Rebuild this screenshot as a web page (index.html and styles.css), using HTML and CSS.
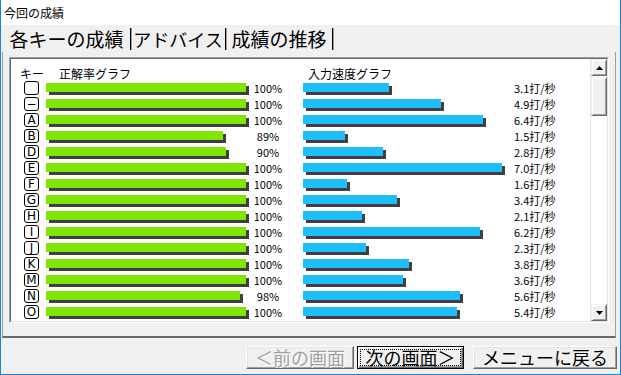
FILE: index.html
```html
<!DOCTYPE html>
<html lang="ja">

<head>
	<meta charset="UTF-8">
	<title>今回の成績</title>
	<link rel="stylesheet" href="styles.css">
</head>

<body>
	<div class="window">
		<div class="titlebar">今回の成績</div>

		<div class="tabs">
			<span class="tab tab-keys">各キーの成績</span>
			<span class="tab tab-advice">アドバイス</span>
			<span class="tab tab-history">成績の推移</span>
		</div>

		<div class="page">
			<div class="listbox">
				<div class="listbox-inner">
					<div class="list">
						<div class="list-head">
							<span class="head-key">キー</span>
							<span class="head-rate">正解率グラフ</span>
							<span class="head-speed">入力速度グラフ</span>
						</div>

						<div class="row"><span class="key"></span><span class="rate-cell"><span class="bar rate" style="width:200px"></span></span><span class="pct">100%</span><span class="speed-cell"><span class="bar speed" style="width:86px"></span></span><span class="spd">3.1打/秒</span></div>
						<div class="row"><span class="key">−</span><span class="rate-cell"><span class="bar rate" style="width:200px"></span></span><span class="pct">100%</span><span class="speed-cell"><span class="bar speed" style="width:138px"></span></span><span class="spd">4.9打/秒</span></div>
						<div class="row"><span class="key">A</span><span class="rate-cell"><span class="bar rate" style="width:200px"></span></span><span class="pct">100%</span><span class="speed-cell"><span class="bar speed" style="width:180px"></span></span><span class="spd">6.4打/秒</span></div>
						<div class="row"><span class="key">B</span><span class="rate-cell"><span class="bar rate" style="width:177px"></span></span><span class="pct">89%</span><span class="speed-cell"><span class="bar speed" style="width:42px"></span></span><span class="spd">1.5打/秒</span></div>
						<div class="row"><span class="key">D</span><span class="rate-cell"><span class="bar rate" style="width:180px"></span></span><span class="pct">90%</span><span class="speed-cell"><span class="bar speed" style="width:80px"></span></span><span class="spd">2.8打/秒</span></div>
						<div class="row"><span class="key">E</span><span class="rate-cell"><span class="bar rate" style="width:200px"></span></span><span class="pct">100%</span><span class="speed-cell"><span class="bar speed" style="width:199px"></span></span><span class="spd">7.0打/秒</span></div>
						<div class="row"><span class="key">F</span><span class="rate-cell"><span class="bar rate" style="width:200px"></span></span><span class="pct">100%</span><span class="speed-cell"><span class="bar speed" style="width:44px"></span></span><span class="spd">1.6打/秒</span></div>
						<div class="row"><span class="key">G</span><span class="rate-cell"><span class="bar rate" style="width:200px"></span></span><span class="pct">100%</span><span class="speed-cell"><span class="bar speed" style="width:94px"></span></span><span class="spd">3.4打/秒</span></div>
						<div class="row"><span class="key">H</span><span class="rate-cell"><span class="bar rate" style="width:200px"></span></span><span class="pct">100%</span><span class="speed-cell"><span class="bar speed" style="width:59px"></span></span><span class="spd">2.1打/秒</span></div>
						<div class="row"><span class="key">I</span><span class="rate-cell"><span class="bar rate" style="width:200px"></span></span><span class="pct">100%</span><span class="speed-cell"><span class="bar speed" style="width:177px"></span></span><span class="spd">6.2打/秒</span></div>
						<div class="row"><span class="key">J</span><span class="rate-cell"><span class="bar rate" style="width:200px"></span></span><span class="pct">100%</span><span class="speed-cell"><span class="bar speed" style="width:63px"></span></span><span class="spd">2.3打/秒</span></div>
						<div class="row"><span class="key">K</span><span class="rate-cell"><span class="bar rate" style="width:200px"></span></span><span class="pct">100%</span><span class="speed-cell"><span class="bar speed" style="width:106px"></span></span><span class="spd">3.8打/秒</span></div>
						<div class="row"><span class="key">M</span><span class="rate-cell"><span class="bar rate" style="width:200px"></span></span><span class="pct">100%</span><span class="speed-cell"><span class="bar speed" style="width:100px"></span></span><span class="spd">3.6打/秒</span></div>
						<div class="row"><span class="key">N</span><span class="rate-cell"><span class="bar rate" style="width:194px"></span></span><span class="pct">98%</span><span class="speed-cell"><span class="bar speed" style="width:157px"></span></span><span class="spd">5.6打/秒</span></div>
						<div class="row"><span class="key">O</span><span class="rate-cell"><span class="bar rate" style="width:200px"></span></span><span class="pct">100%</span><span class="speed-cell"><span class="bar speed" style="width:154px"></span></span><span class="spd">5.4打/秒</span></div>
					</div>

					<div class="scrollbar">
						<div class="sb-btn">
							<svg width="7" height="4" viewBox="0 0 7 4"><polygon points="3.5,0 7,4 0,4" fill="#000"/></svg>
						</div>
						<div class="sb-thumb"></div>
						<div class="sb-track"></div>
						<div class="sb-btn">
							<svg width="7" height="4" viewBox="0 0 7 4"><polygon points="0,0 7,0 3.5,4" fill="#000"/></svg>
						</div>
					</div>
				</div>
			</div>
		</div>

		<div class="buttons">
			<button class="btn btn-prev" disabled>＜前の画面</button>
			<button class="btn btn-next">次の画面＞</button>
			<button class="btn btn-menu">メニューに戻る</button>
		</div>
	</div>
</body>

</html>
```

FILE: styles.css
```css
* {
	margin: 0;
	padding: 0;
	box-sizing: border-box;
	font-family: 'Noto Sans CJK JP', 'Liberation Sans', sans-serif;
}

body {
	width: 621px;
	height: 375px;
	background: #f0f0f0;
	overflow: hidden;
}

.window {
	width: 621px;
	height: 375px;
	border: 1px solid #1c84d8;
	border-top: none;
	background: #f0f0f0;
	display: flex;
	flex-direction: column;
}

.titlebar {
	height: 25px;
	background: #fff;
	padding: 1px 0 0 3px;
	font-size: 12px;
	line-height: 24px;
	color: #000;
}

/* tab strip */
.tabs {
	height: 27px;
	display: flex;
	padding-left: 2px;
}

.tab {
	margin-top: 3px;
	height: 22px;
	font-size: 19px;
	line-height: 22px;
	text-align: center;
	color: #000;
	border-right: 1px solid #000;
	box-shadow: 1px 0 0 #a0a0a0;
}

.tab-keys {
	width: 128px;
}

.tab-advice {
	width: 95px;
	font-size: 18px;
}

.tab-history {
	width: 107px;
}

.page {
	height: 286px;
	margin: 0 4px 0 1px;
	border-left: 1px solid #a0a0a0;
	border-right: 1px solid #a0a0a0;
	border-bottom: 2px solid #696969;
	padding: 5px 0 0 6px;
}

/* sunken list box */
.listbox {
	width: 600px;
	height: 266px;
	border: 1px solid;
	border-color: #a0a0a0 #fff #fff #a0a0a0;
}

.listbox-inner {
	height: 100%;
	border: 1px solid;
	border-color: #696969 #e3e3e3 #e3e3e3 #696969;
	background: #fff;
	display: flex;
}

.list {
	flex: 1;
	padding-top: 7px;
	overflow: hidden;
}

.list-head {
	height: 15px;
	display: flex;
	font-size: 12px;
	line-height: 15px;
	color: #000;
}

.head-key {
	width: 48px;
	padding-left: 9px;
}

.head-rate {
	width: 249px;
}

.row {
	height: 16px;
	display: flex;
	align-items: flex-start;
	padding-left: 13px;
}

.key {
	width: 15px;
	height: 14px;
	border: 1px solid #000;
	border-radius: 3px;
	font-family: 'DejaVu Sans', sans-serif;
	font-size: 12px;
	line-height: 12px;
	text-align: center;
	color: #000;
}

.rate-cell {
	width: 206px;
	margin-left: 7px;
}

.speed-cell {
	width: 211px;
	margin-left: 19px;
}

.bar {
	display: block;
	height: 9px;
	margin-top: 2px;
	box-shadow: 3px 3px 0 #404040;
}

.rate {
	background: #80e600;
}

.speed {
	background: #1ebeff;
}

.pct,
.spd {
	font-size: 11px;
	line-height: 15px;
	color: #000;
}

.pct {
	width: 32px;
	text-align: center;
}

/* classic scroll bar */
.scrollbar {
	width: 17px;
	display: flex;
	flex-direction: column;
	background: #fff;
	border-left: 1px solid #e3e3e3;
}

.sb-btn,
.sb-thumb {
	background: #f0f0f0;
	border: 1px solid;
	border-color: #f0f0f0 #696969 #696969 #f0f0f0;
	box-shadow: inset 1px 1px 0 #fff, inset -1px -1px 0 #a0a0a0;
}

.sb-btn {
	height: 17px;
	display: flex;
	align-items: center;
	justify-content: center;
}

.sb-btn svg {
	display: block;
}

.sb-thumb {
	height: 39px;
	margin-top: 1px;
}

.sb-track {
	flex: 1;
}

/* dialog buttons */
.buttons {
	display: flex;
	justify-content: flex-end;
	gap: 3px;
	padding: 8px 3px 0 0;
}

.btn {
	height: 23px;
	font-size: 18px;
	line-height: 19px;
	color: #000;
	background: #f0f0f0;
	border: 1px solid;
	border-color: #fff #696969 #696969 #fff;
	box-shadow: inset -1px -1px 0 #a0a0a0, inset 1px 1px 0 #e3e3e3;
}

.btn-prev {
	width: 108px;
	color: #a0a0a0;
	text-shadow: 1px 1px 0 #fff;
}

.btn-next {
	width: 107px;
	border-color: #000;
	box-shadow: inset 1px 1px 0 #fff, inset -1px -1px 0 #696969, inset -2px -2px 0 #a0a0a0;
	outline: 1px dotted #000;
	outline-offset: -4px;
}

.btn-menu {
	width: 144px;
	margin-left: 6px;
}
```
